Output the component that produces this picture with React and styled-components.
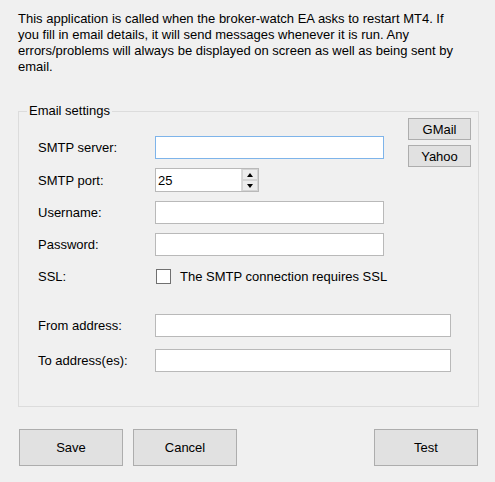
import React from "react";
import styled, { createGlobalStyle } from "styled-components";

const Global = createGlobalStyle`
  html, body { margin: 0; padding: 0; background: #f0f0f0; }
  body { font-family: "Liberation Sans", Arial, sans-serif; font-size: 13px; color: #000; }
  * { box-sizing: border-box; }
`;

const Page = styled.div`
  width: 495px;
  height: 482px;
  padding: 11px 16px 0 18px;
  background: #f0f0f0;
`;

const Intro = styled.p`
  margin: 0;
  width: 450px;
  line-height: 16px;
  font-size: 13px;
`;

const Group = styled.fieldset`
  margin: 29px 0 0 0;
  padding: 0 7px 34px 0;
  width: 461px;
  border: 1px solid #dcdcdc;
  min-width: 0;
`;

const Title = styled.legend`
  margin-left: 8px;
  padding: 0 2px;
  font-size: 13px;
  line-height: 14px;
`;

/* Preset buttons sit in the top-right corner; the form rows flow beside them */
const Side = styled.div`
  float: right;
  display: flex;
  flex-direction: column;
  gap: 5px;
`;

const Form = styled.div`
  padding: 18px 0 0 19px;
`;

const Row = styled.div`
  display: flex;
  align-items: center;
  height: ${(p) => p.$h || 23}px;
  margin-top: ${(p) => p.$gap || 0}px;
`;

const Label = styled.label`
  width: 117px;
  flex: none;
  font-size: 13px;
`;

const TextBox = styled.input`
  width: ${(p) => p.$w}px;
  flex: none;
  height: 23px;
  border: 1px solid ${(p) => (p.$focused ? "#7eb4ea" : "#b9b9b9")};
  background: #fff;
  margin: 0;
  padding: 0 3px;
  font: inherit;
  outline: none;
`;

const Spin = styled.div`
  display: flex;
  flex: none;
  width: 104px;
  height: 24px;
  border: 1px solid #b9b9b9;
  background: #fff;
`;

const SpinInput = styled.input`
  flex: 1;
  min-width: 0;
  border: 0;
  outline: none;
  padding: 0 2px;
  font: inherit;
  font-size: 13px;
  background: transparent;
`;

const SpinButtons = styled.div`
  width: 17px;
  display: flex;
  flex-direction: column;
  background: #f0f0f0;
  border-left: 1px solid #dadada;
`;

const SpinBtn = styled.div`
  flex: 1;
  display: flex;
  align-items: center;
  justify-content: center;
  border: 1px solid #d4d4d4;
  background: #ececec;
  &::after {
    content: "";
    width: 0;
    height: 0;
    border-left: 3.5px solid transparent;
    border-right: 3.5px solid transparent;
    ${(p) =>
      p.$down
        ? "border-top: 4px solid #000;"
        : "border-bottom: 4px solid #000;"}
  }
`;

const Check = styled.span`
  width: 15px;
  height: 15px;
  flex: none;
  border: 1px solid #707070;
  background: #fff;
  margin: 0 9px 0 1px;
`;

const CheckText = styled.span`
  font-size: 13px;
`;

const Button = styled.button`
  width: ${(p) => p.$w}px;
  height: ${(p) => p.$h}px;
  background: #e1e1e1;
  border: 1px solid #adadad;
  border-radius: 0;
  margin: 0;
  padding: 0;
  font-family: "Liberation Sans", Arial, sans-serif;
  font-size: 13px;
  color: #000;
`;

const Actions = styled.div`
  margin-top: 22px;
  display: flex;
  gap: 10px;
  width: 460px;
  padding-left: 1px;
`;

const Spacer = styled.div`
  flex: 1;
`;

export default function App() {
  return (
    <>
      <Global />
      <Page>
        <Intro>
          This application is called when the broker-watch EA asks to restart MT4. If you fill in
          email details, it will send messages whenever it is run. Any errors/problems will always
          be displayed on screen as well as being sent by email.
        </Intro>
        <Group>
          <Title>Email settings</Title>
          <Side>
            <Button $w={63} $h={22}>GMail</Button>
            <Button $w={63} $h={22}>Yahoo</Button>
          </Side>
          <Form>
            <Row>
              <Label>SMTP server:</Label>
              <TextBox $w={229} $focused />
            </Row>
            <Row $gap={9} $h={24}>
              <Label>SMTP port:</Label>
              <Spin>
                <SpinInput defaultValue="25" />
                <SpinButtons>
                  <SpinBtn />
                  <SpinBtn $down />
                </SpinButtons>
              </Spin>
            </Row>
            <Row $gap={9}>
              <Label>Username:</Label>
              <TextBox $w={229} />
            </Row>
            <Row $gap={9}>
              <Label>Password:</Label>
              <TextBox $w={229} type="text" />
            </Row>
            <Row $gap={9}>
              <Label>SSL:</Label>
              <Check />
              <CheckText>The SMTP connection requires SSL</CheckText>
            </Row>
            <Row $gap={26}>
              <Label>From address:</Label>
              <TextBox $w={296} />
            </Row>
            <Row $gap={12}>
              <Label>To address(es):</Label>
              <TextBox $w={296} />
            </Row>
          </Form>
        </Group>
        <Actions>
          <Button $w={104} $h={37}>Save</Button>
          <Button $w={104} $h={37}>Cancel</Button>
          <Spacer />
          <Button $w={104} $h={37}>Test</Button>
        </Actions>
      </Page>
    </>
  );
}
